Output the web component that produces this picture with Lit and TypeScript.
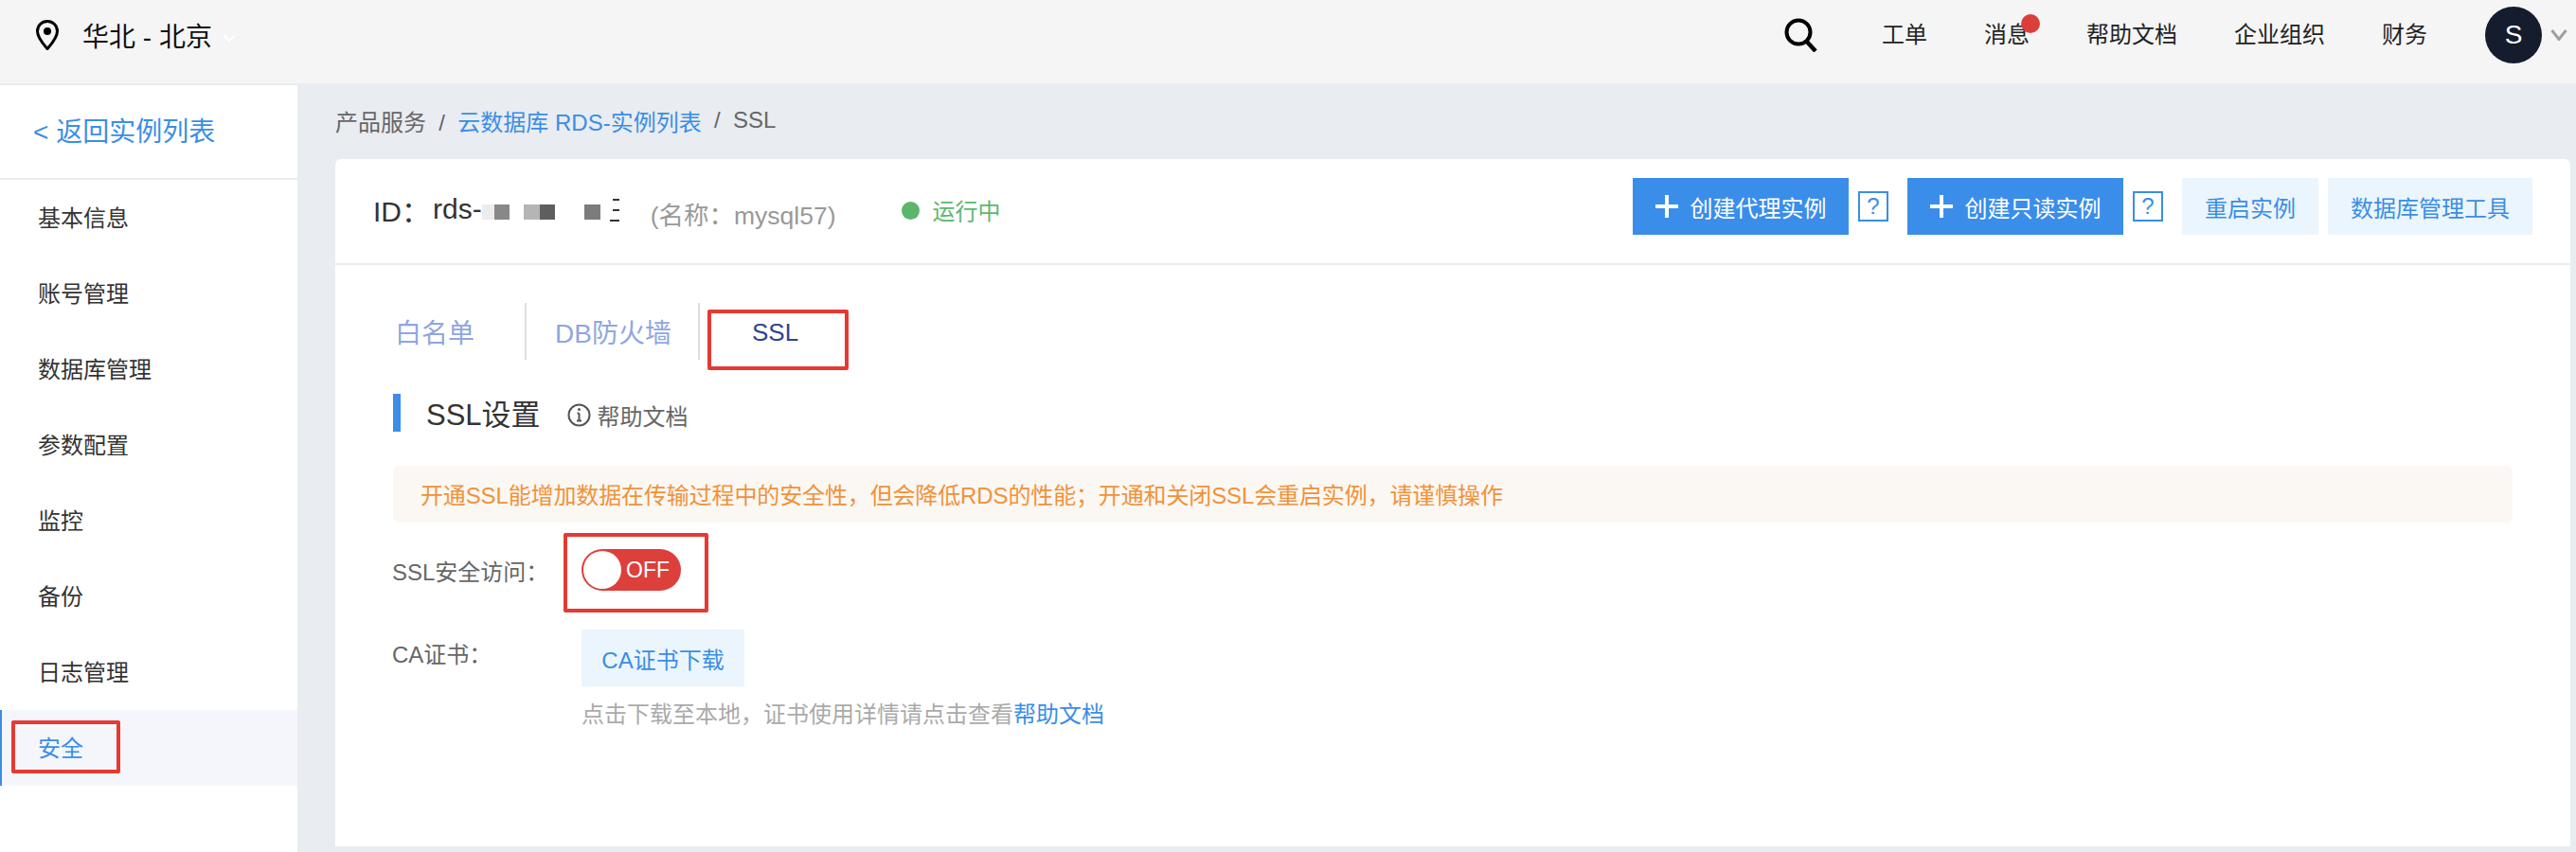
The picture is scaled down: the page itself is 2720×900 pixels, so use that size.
import { LitElement, html, css } from "lit";
import { customElement } from "lit/decorators.js";

const NAV = ["基本信息", "账号管理", "数据库管理", "参数配置", "监控", "备份", "日志管理", "安全"];

@customElement("app-root")
export class AppRoot extends LitElement {
  static styles = css`
    :host { display: block; width: 2720px; height: 900px; overflow: hidden; background: #e9ecf1;
      font-family: "Liberation Sans", "Noto Sans CJK SC", sans-serif; font-size: 24px; color: #333; }
    * { box-sizing: border-box; }
    .top { height: 90px; background: #f5f5f5; border-bottom: 2px solid #e9ecf1; display: flex; align-items: center; padding: 0 9px 0 38px; }
    .pin { width: 24px; height: 32px; margin-top: -14px; }
    .region { margin-left: 25px; font-size: 28px; color: #111; line-height: 40px; margin-top: -8px; }
    .regionchev { width: 14px; height: 8px; margin: -8px 0 0 11px; }
    .spacer { flex: 1; }
    .search { width: 36px; height: 36px; margin: -14px 68px 0 0; }
    .links { display: flex; gap: 60px; margin-top: -14px; }
    .link { position: relative; color: #222; line-height: 34px; }
    .dot { position: absolute; left: 39px; top: -5px; width: 20px; height: 20px; border-radius: 50%; background: #da3f3a; }
    .avatar { width: 60px; height: 60px; border-radius: 50%; background: #141c2e; color: #fff; margin: -14px 0 0 61px; display: flex; align-items: center; justify-content: center; font-size: 28px; }
    .chev { width: 18px; height: 12px; margin: -14px 0 0 9px; }
    .body { display: flex; height: 810px; }
    .side { width: 314px; background: #fff; flex: none; }
    .back { height: 100px; border-bottom: 2px solid #e9ecf1; color: #3a8ee6; font-size: 28px; padding: 0 0 4px 35px; display: flex; align-items: center; }
    .item { position: relative; height: 80px; padding: 0 0 3px 40px; display: flex; align-items: center; color: #333; }
    .item.active { background: #f4f6fb; color: #3a8ee6; border-left: 2px solid #3a8ee6; padding-left: 38px; }
    .mark { position: absolute; border: 4px solid #e53a33; border-radius: 2px; pointer-events: none; }
    .mark.side-m { left: 10px; top: 11px; width: 115px; height: 56px; }
    .main { flex: 1; padding: 0 6px 6px 40px; display: flex; flex-direction: column; }
    .crumb { height: 78px; display: flex; align-items: center; color: #666; padding-bottom: 4px; white-space: pre; }
    .crumb a { color: #3a8ee6; }
    .card { flex: 1; background: #fff; border-radius: 6px 6px 0 0; }
    .head { height: 112px; border-bottom: 2px solid #e9ecf1; display: flex; align-items: center; padding: 0 40px 0 40px; }
    .id { font-size: 30px; color: #333; display: flex; align-items: center; margin-top: -4px; white-space: pre; }
    .idl { margin-right: 3px; }
    .blurs { display: flex; align-items: center; height: 16px; margin-top: 6px; }
    .blur { height: 16px; }
    .bars { display: flex; flex-direction: column; align-items: flex-end; width: 10px; height: 24px; justify-content: space-between; margin-top: 2px; }
    .bars i { height: 2px; background: #333; width: 7px; }
    .bars i:last-child { width: 10px; }
    .name { color: #999; font-size: 26.5px; margin-left: 33px; margin-top: 4px; }
    .stat { width: 19px; height: 19px; border-radius: 50%; background: #5cb56b; margin-left: 69px; margin-top: -2px; }
    .run { color: #5cb870; margin-left: 14px; margin-top: -4px; }
    .actions { display: flex; align-items: center; margin-top: -10px; }
    .btn { height: 60px; display: flex; align-items: center; justify-content: center; white-space: nowrap; }
    .pri { width: 228px; background: #3a8ee9; color: #fff; }
    .pri svg { width: 24px; height: 24px; margin-right: 13px; }
    .q { width: 32px; height: 32px; border: 2px solid #3a8ee6; color: #3a8ee6; margin: 0 20px 0 10px; display: flex; align-items: center; justify-content: center; font-size: 24px; }
    .sec { background: #ebf5fd; color: #3a8ee6; }
    .r1 { width: 144px; margin-right: 10px; }
    .r2 { width: 216px; }
    .content { padding: 40px 61px 0; }
    .tabs { display: flex; height: 60px; position: relative; }
    .tab { display: flex; align-items: center; font-size: 28px; color: #8fa6e0; height: 60px; border-right: 2px solid #ddd; }
    .t1 { width: 141px; padding-left: 2px; }
    .t2 { width: 183px; padding-left: 30px; }
    .t3 { border: 0; color: #2c4590; font-size: 26px; padding: 2px 0 0 55px; }
    .mark.tab-m { left: 332px; top: 7px; width: 149px; height: 64px; }
    .title { display: flex; align-items: center; height: 40px; margin-top: 36px; border-left: 8px solid #3a8ee9; padding-left: 27px; }
    .title b { font-weight: 400; font-size: 31px; color: #333; margin-top: -2px; }
    .title svg { width: 25px; height: 25px; margin: 4px 7px 0 28px; }
    .title span { color: #666; margin-top: 4px; }
    .notice { height: 60px; margin-top: 36px; background: #fbf7f2; border-radius: 6px; color: #f0923a; display: flex; align-items: center; padding: 0 0 2px 29px; letter-spacing: -0.13px; }
    .row { display: flex; }
    .label { width: 199px; color: #666; flex: none; margin-left: -1px; margin-right: 1px; }
    .sw-row { height: 44px; margin-top: 28px; align-items: center; position: relative; }
    .switch { width: 105px; height: 44px; border-radius: 22px; background: #dd3f3a; color: #fff; display: flex; align-items: center; padding: 2px; }
    .knob { width: 40px; height: 40px; border-radius: 50%; background: #fff; flex: none; }
    .switch span { margin-left: 5px; font-size: 23px; }
    .mark.sw-m { left: 180px; top: -17px; width: 153px; height: 84px; }
    .ca { margin-top: 41px; }
    .ca .label { line-height: 34px; margin-top: 10px; }
    .dl { width: 172px; }
    .hint { color: #aaa; margin: 13px 0 0 199px; line-height: 34px; }
    .hint a { color: #3a8ee6; }
  `;

  private plus() {
    return html`<svg viewBox="0 0 24 24"><path d="M10 0h4v10h10v4H14v10h-4V14H0v-4h10z" fill="#fff"/></svg>`;
  }

  render() {
    const blurs: [number, string][] = [[13, "#ececec"], [16, "#888"], [15, "#fff"], [17, "#b5b5b5"], [16, "#5e5e5e"], [31, "#fff"], [17, "#7c7c7c"], [10, "#fff"]];
    return html`
      <div class="top">
        <svg class="pin" viewBox="0 0 24 32"><path d="M12 1.500C6 1.500 1.500 6 1.500 12c0 7 6.500 14 10.500 18.500C16 26 22.500 19 22.500 12 22.500 6 18 1.500 12 1.500z" fill="none" stroke="#000" stroke-width="3"/><circle cx="12" cy="12" r="4" fill="#000"/></svg>
        <div class="region">华北 - 北京</div>
        <svg class="regionchev" viewBox="0 0 14 8"><path d="M1 1l6 6 6-6" fill="none" stroke="#fff" stroke-width="2"/></svg>
        <div class="spacer"></div>
        <svg class="search" viewBox="0 0 36 36"><circle cx="16" cy="15" r="12.500" fill="none" stroke="#000" stroke-width="4"/><path d="M24 24l10 11" stroke="#000" stroke-width="4.500"/></svg>
        <div class="links">
          <div class="link">工单</div>
          <div class="link">消息<i class="dot"></i></div>
          <div class="link">帮助文档</div>
          <div class="link">企业组织</div>
          <div class="link">财务</div>
        </div>
        <div class="avatar">S</div>
        <svg class="chev" viewBox="0 0 18 12"><path d="M1.500 1l7.500 9.500L16.500 1" fill="none" stroke="#a0a0a0" stroke-width="3"/></svg>
      </div>
      <div class="body">
        <aside class="side">
          <div class="back">&lt; 返回实例列表</div>
          ${NAV.map((n) => html`<div class="item ${n === "安全" ? "active" : ""}">${n}${n === "安全" ? html`<i class="mark side-m"></i>` : ""}</div>`)}
        </aside>
        <main class="main">
          <div class="crumb">产品服务  /  <a>云数据库 RDS-实例列表</a>  /  SSL</div>
          <section class="card">
            <div class="head">
              <div class="id"><span class="idl">ID：</span><span>rds-</span><span class="blurs">${blurs.map(([w, c]) => html`<i class="blur" style="width:${w}px;background:${c}"></i>`)}</span><span class="bars"><i></i><i></i><i></i></span></div>
              <div class="name">(名称：mysql57)</div>
              <i class="stat"></i>
              <div class="run">运行中</div>
              <div class="spacer"></div>
              <div class="actions">
                <div class="btn pri">${this.plus()}创建代理实例</div>
                <div class="q">?</div>
                <div class="btn pri">${this.plus()}创建只读实例</div>
                <div class="q">?</div>
                <div class="btn sec r1">重启实例</div>
                <div class="btn sec r2">数据库管理工具</div>
              </div>
            </div>
            <div class="content">
              <div class="tabs">
                <div class="tab t1">白名单</div>
                <div class="tab t2">DB防火墙</div>
                <div class="tab t3">SSL</div>
                <i class="mark tab-m"></i>
              </div>
              <div class="title">
                <b>SSL设置</b>
                <svg viewBox="0 0 25 25"><circle cx="12.500" cy="12.500" r="11" fill="none" stroke="#555" stroke-width="2"/><path d="M12.500 10.500v8M10 18.500h5M10.500 10.500h2" fill="none" stroke="#555" stroke-width="2"/><circle cx="12.500" cy="6.500" r="1.500" fill="#555"/></svg>
                <span>帮助文档</span>
              </div>
              <div class="notice">开通SSL能增加数据在传输过程中的安全性，但会降低RDS的性能；开通和关闭SSL会重启实例，请谨慎操作</div>
              <div class="row sw-row">
                <div class="label">SSL安全访问：</div>
                <div class="switch"><i class="knob"></i><span>OFF</span></div>
                <i class="mark sw-m"></i>
              </div>
              <div class="row ca">
                <div class="label">CA证书：</div>
                <div class="btn sec dl">CA证书下载</div>
              </div>
              <div class="hint">点击下载至本地，证书使用详情请点击查看<a>帮助文档</a></div>
            </div>
          </section>
        </main>
      </div>
    `;
  }
}
